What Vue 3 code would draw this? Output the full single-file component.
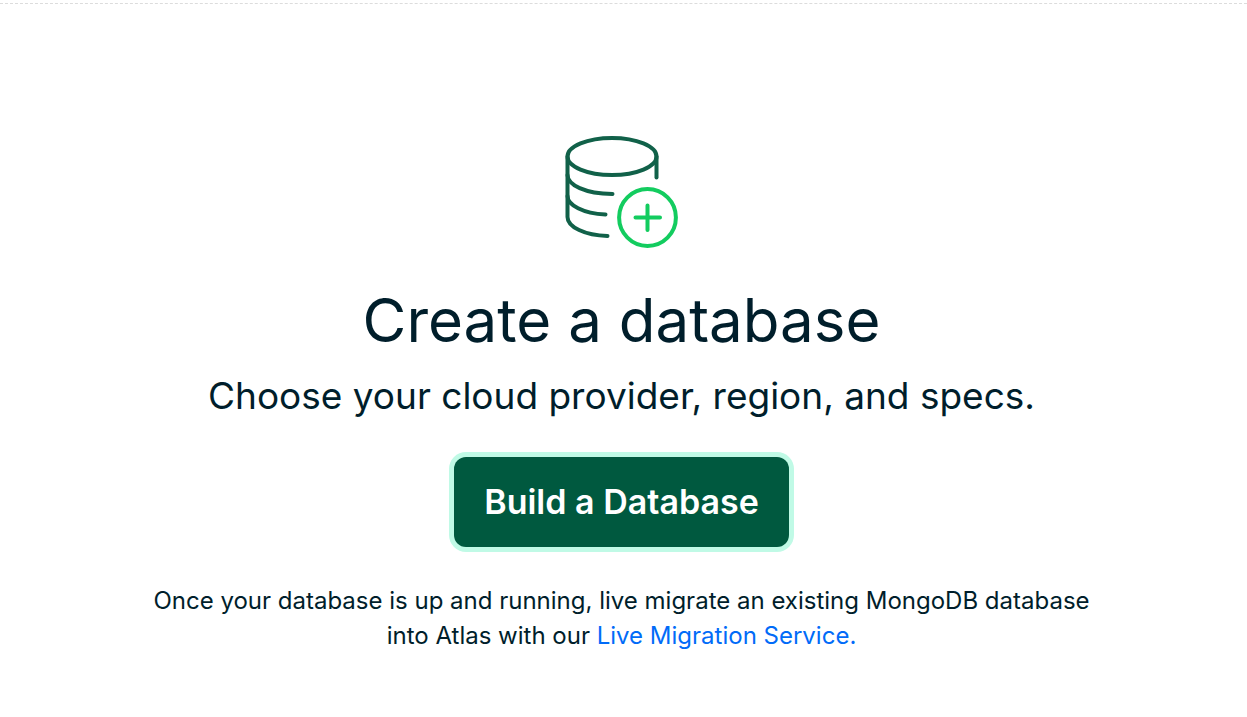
<script setup>
const migrationUrl = '#live-migration'
</script>

<template>
  <main class="page">
    <section class="empty-state">
      <svg class="icon" width="118" height="116" viewBox="0 0 118 116" fill="none" stroke-width="4" stroke-linecap="round" aria-hidden="true">
        <g stroke="#116149">
          <ellipse cx="49" cy="22.5" rx="44.5" ry="18.5" />
          <path d="M4.500 22.5V83C4.500 93 22 101.500 44.500 102" />
          <path d="M93.500 22.500V43.500" />
          <path d="M4.500 41C4.500 51 22 59.500 49.500 60" />
          <path d="M4.500 62C4.500 71 20 79.500 42.500 80.500" />
        </g>
        <g stroke="#13cc5f">
          <circle cx="84.500" cy="83.500" r="28.400" />
          <path d="M84.500 71.500V96M72.500 83.500H97" />
        </g>
      </svg>
      <h1 class="title">Create a database</h1>
      <p class="subtitle">Choose your cloud provider, region, and specs.</p>
      <button class="build" type="button">Build a Database</button>
      <p class="note">
        Once your database is up and running, live migrate an existing MongoDB database into Atlas with our
        <a class="link" :href="migrationUrl">Live Migration Service.</a>
      </p>
    </section>
  </main>
</template>

<style>
body {
  background: #fff;
}
</style>

<style scoped>
.page {
  padding-top: 3px;
  color: #001e2b;
  font-family: Inter, "Liberation Sans", sans-serif;
}
.empty-state {
  display: flex;
  flex-direction: column;
  align-items: center;
  padding: 130px 4px 60px 0;
  border-top: 1px dashed #dcdcdc;
  text-align: center;
}
.icon {
  display: block;
}
.title {
  margin: 30px 0 0;
  font-size: 60px;
  font-weight: 400;
  line-height: 80px;
}
.subtitle {
  margin: 12px 0 0;
  font-size: 37px;
  font-weight: 400;
  line-height: 48px;
}
.build {
  margin: 37px 0 0;
  padding: 0 30px;
  height: 90px;
  border: 0;
  border-radius: 12px;
  background: #00593f;
  box-shadow: 0 0 0 5px #c0fae6;
  color: #fff;
  font-family: inherit;
  font-size: 34px;
  font-weight: 600;
  line-height: 40px;
}
.note {
  max-width: 980px;
  margin: 36px 0 0;
  font-size: 24px;
  line-height: 35px;
}
.link {
  color: #016bf8;
  text-decoration: none;
}
</style>
